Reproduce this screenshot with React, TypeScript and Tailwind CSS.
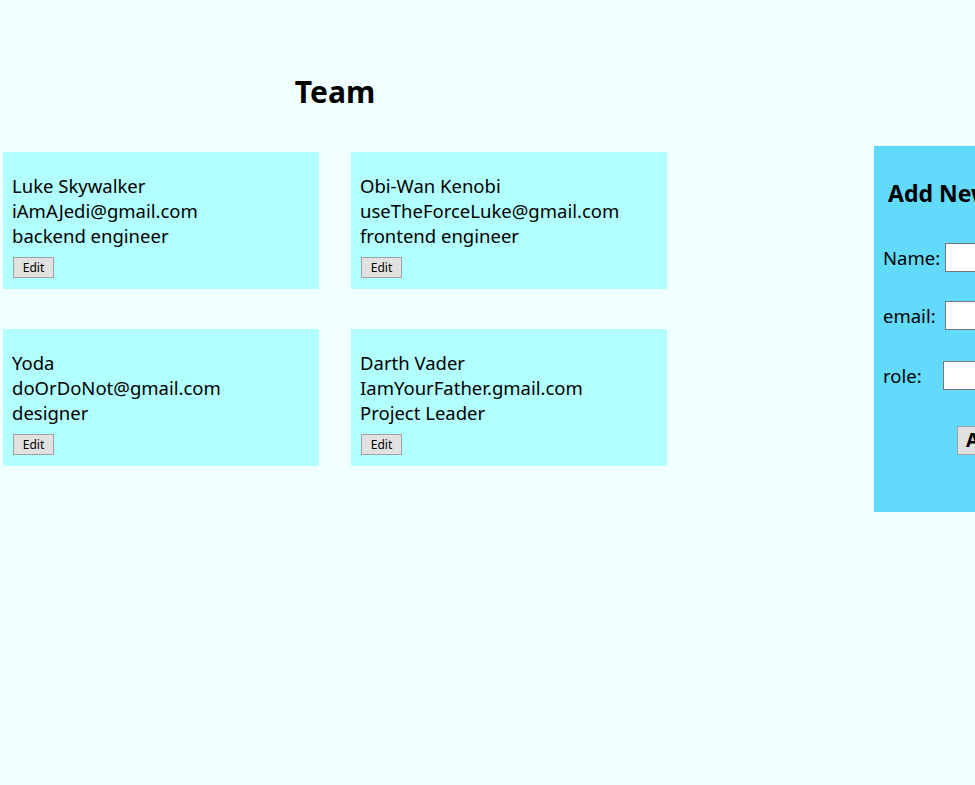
import React from "react";

const members = [
  { name: "Luke Skywalker", email: "iAmAJedi@gmail.com", role: "backend engineer" },
  { name: "Obi-Wan Kenobi", email: "useTheForceLuke@gmail.com", role: "frontend engineer" },
  { name: "Yoda", email: "doOrDoNot@gmail.com", role: "designer" },
  { name: "Darth Vader", email: "IamYourFather.gmail.com", role: "Project Leader" },
];

export default function App() {
  return (
    <div
      className="w-[975px] h-[785px] overflow-hidden bg-[#f0ffff] text-black"
      style={{ fontFamily: '"Noto Sans", "Open Sans", sans-serif' }}
    >
      <div className="flex items-start">
        <div className="ml-[3px] w-[664px] shrink-0">
          <h2 className="mt-[72px] h-[40px] text-center text-[30px] leading-[40px] font-bold">Team</h2>
          <div className="mt-[40px] grid grid-cols-[316px_316px] gap-x-[32px] gap-y-[40px]">
            {members.map((m) => (
              <div key={m.name} className="h-[137px] bg-[#b2ffff] pl-[9px] pt-[21px]">
                <div className="text-[18.5px] leading-[25px]">{m.name}</div>
                <div className="text-[18.5px] leading-[25px]">{m.email}</div>
                <div className="text-[18.5px] leading-[25px]">{m.role}</div>
                <button className="mt-[9px] ml-[1px] h-[21px] w-[41px] border border-[#a0a0a0] bg-[#e1e1e1] text-[12px] leading-[19px]">
                  Edit
                </button>
              </div>
            ))}
          </div>
        </div>
        <div className="ml-[207px] mt-[146px] h-[366px] w-[300px] shrink-0 bg-[#61dafb] pl-[9px]">
          <h3 className="mt-[33px] ml-[5px] text-[23px] leading-[28px] font-bold whitespace-nowrap">Add New Member</h3>
          <div className="mt-[36px] flex items-center h-[29px]">
            <span className="text-[18.5px] w-[62px]">Name:</span>
            <input className="h-[29px] w-[180px] border border-[#767676] bg-white" />
          </div>
          <div className="mt-[29px] flex items-center h-[29px]">
            <span className="text-[18.5px] w-[62px]">email:</span>
            <input className="h-[29px] w-[180px] border border-[#767676] bg-white" />
          </div>
          <div className="mt-[31px] flex items-center h-[29px]">
            <span className="text-[18.5px] w-[60px]">role:</span>
            <input className="h-[29px] w-[180px] border border-[#767676] bg-white" />
          </div>
          <button className="mt-[36px] ml-[74px] h-[29px] px-[8px] border border-[#a0a0a0] bg-[#e1e1e1] text-[19px] leading-[27px] font-bold">
            Add
          </button>
        </div>
      </div>
    </div>
  );
}
